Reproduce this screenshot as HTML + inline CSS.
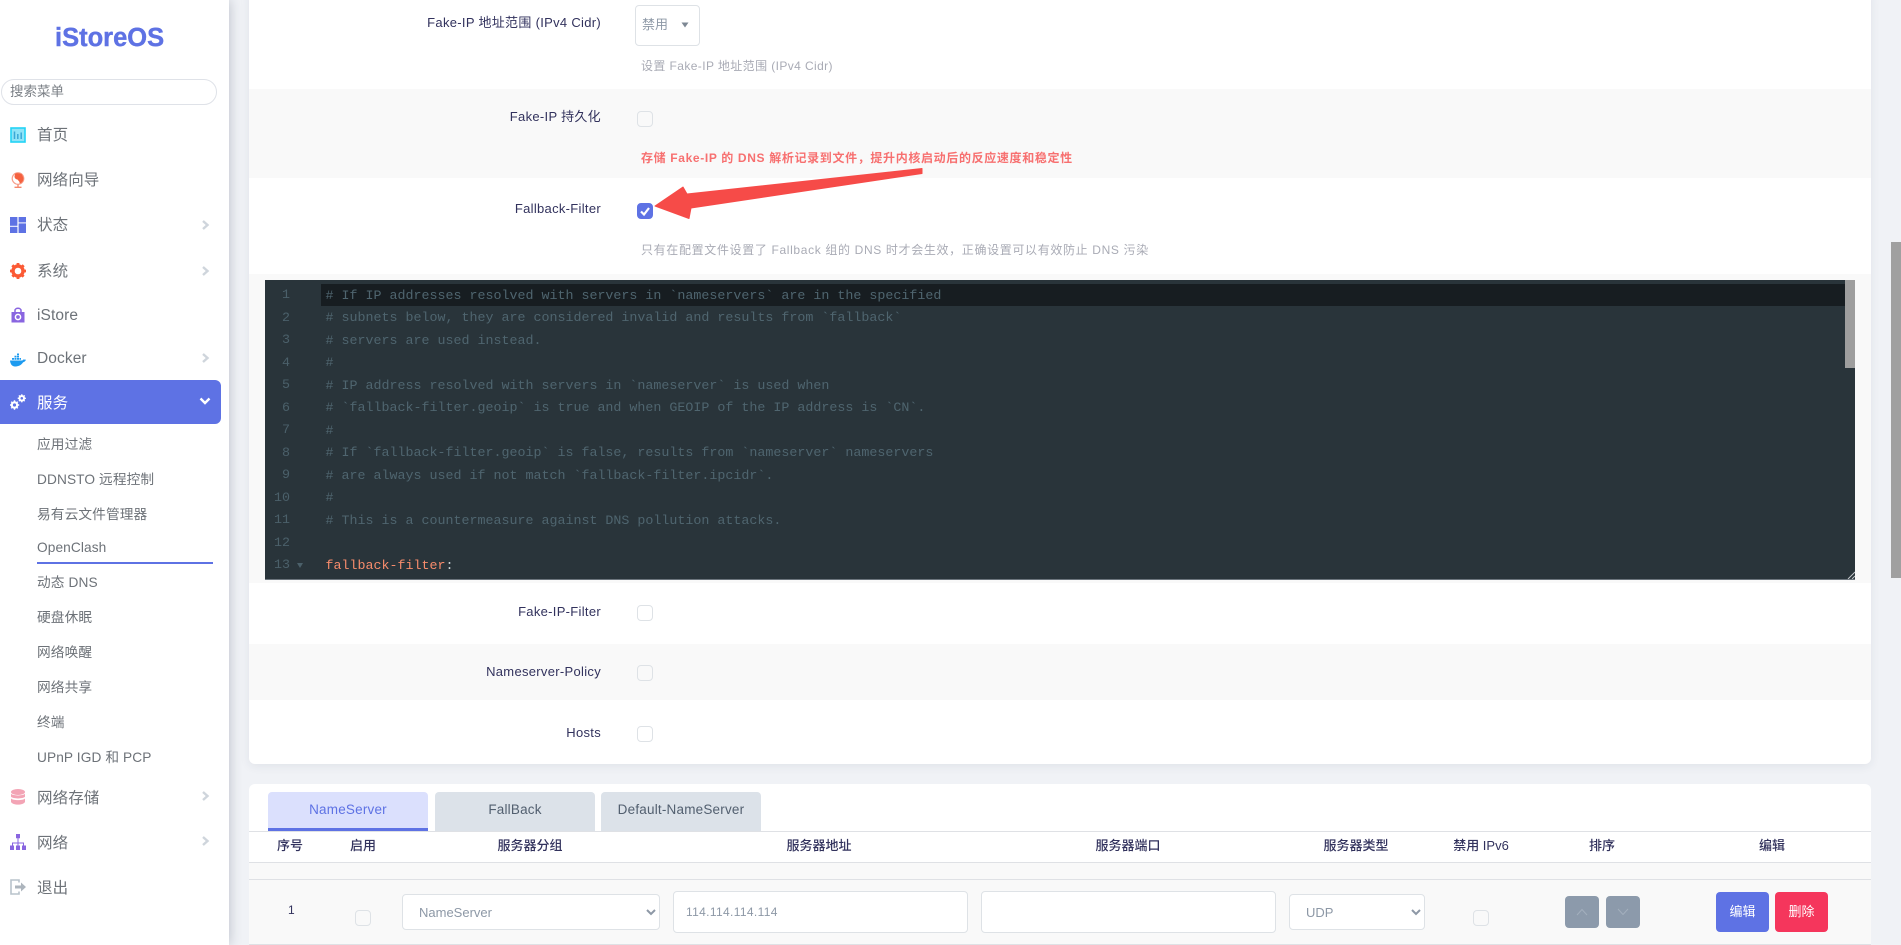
<!DOCTYPE html>
<html lang="zh-CN">
<head>
<meta charset="utf-8">
<title>OpenClash</title>
<style>
html,body{margin:0;padding:0;width:1901px;height:945px;overflow:hidden;background:#f0f2f6;font-family:"Liberation Sans","Noto Sans CJK SC",sans-serif;}
#wrap{position:absolute;left:0;top:0;width:1901px;height:945px;overflow:hidden;background:#f0f2f6;}
.a{position:absolute;}
.t{position:absolute;white-space:nowrap;line-height:20px;height:20px;}
#side{position:absolute;left:0;top:0;width:229px;height:945px;background:#fff;box-shadow:0 0 12px rgba(40,50,80,.28);z-index:3;}
.m{font-size:15.5px;color:#6d7278;left:37px;letter-spacing:.1px;}
.s{font-size:13.7px;color:#6d7278;left:37px;letter-spacing:.1px;}
.chev{position:absolute;left:199.500px;width:10px;height:12px;}
.ic{position:absolute;left:10px;width:16px;height:16px;}
.lab{font-size:13px;color:#32325d;right:1300px;letter-spacing:.3px;text-align:right;}
.desc{font-size:12px;color:#a9abb5;left:641px;letter-spacing:.4px;}
.cb{position:absolute;box-sizing:border-box;width:16px;height:16px;border:1px solid #dee2e6;border-radius:4px;background:#fff;}
.row{position:absolute;left:249px;width:1622px;}
.th{font-size:13px;color:#32325d;font-weight:500;transform:translateX(-50%);}
.tab{position:absolute;top:792px;height:39px;box-sizing:border-box;border-radius:4px 4px 0 0;background:#dce2e9;color:#525f6f;font-size:13.5px;text-align:center;line-height:36px;letter-spacing:.2px;}
.inp{position:absolute;box-sizing:border-box;background:#fff;border:1px solid #dee2e6;border-radius:4px;color:#8d98a6;font-size:12px;line-height:40px;padding-left:12px;letter-spacing:.35px;}
select{position:absolute;box-sizing:border-box;background:#fff;border:1px solid #dee2e6;border-radius:4px;color:#8d98a6;font-size:13px;padding:0 0 0 12px;font-family:"Liberation Sans","Noto Sans CJK SC",sans-serif;margin:0;}
.btn{position:absolute;top:892px;width:53px;height:40px;border-radius:4px;color:#fff;font-size:13px;text-align:center;line-height:40px;}
.sb{position:absolute;top:896px;width:34px;height:32px;border-radius:4px;background:#8c9aab;}
#ed{position:absolute;left:265px;top:280px;width:1590px;height:300px;background:#29343a;border-bottom:1px solid #6c757d;box-sizing:border-box;overflow:hidden;}
.ln{position:absolute;left:0;width:25px;text-align:right;font:13.33px/22px "Liberation Mono",monospace;color:#4b606a;}
.cd{position:absolute;left:60.500px;font:13.33px/22px "Liberation Mono",monospace;color:#4f656f;white-space:pre;}
</style>
</head>
<body>
<div id="wrap">

<!-- main card 1 -->
<div class="a" style="left:249px;top:-10px;width:1622px;height:774px;background:#fff;border-radius:6px;box-shadow:0 2px 10px rgba(40,50,80,.08);"></div>
<div class="row" style="top:89px;height:89px;background:#f9f9f9;"></div>
<div class="row" style="top:274px;height:309px;background:#f9f9f9;"></div>
<div class="row" style="top:644px;height:56px;background:#f9f9f9;"></div>

<div class="t lab" style="top:13px;">Fake-IP 地址范围 (IPv4 Cidr)</div>
<div class="a" style="left:635px;top:5px;width:65px;height:41px;box-sizing:border-box;border:1px solid #dee2e6;border-radius:4px;background:#fff;"></div>
<div class="t" style="left:642px;top:15px;font-size:13px;color:#8d98a6;">禁用</div>
<svg class="a" style="left:681px;top:22px;" width="8" height="6" viewBox="0 0 8 6"><path d="M0.5 0.5H7.5L4 5.5Z" fill="#7d8894"/></svg>
<div class="t desc" style="top:56px;">设置 Fake-IP 地址范围 (IPv4 Cidr)</div>

<div class="t lab" style="top:107px;">Fake-IP 持久化</div>
<div class="cb" style="left:637px;top:111px;background:#f9f9f9;"></div>
<div class="t desc" style="top:148px;color:#f77070;font-weight:bold;letter-spacing:.65px;">存储 Fake-IP 的 DNS 解析记录到文件&#65292;提升内核启动后的反应速度和稳定性</div>

<div class="t lab" style="top:199px;">Fallback-Filter</div>
<div class="cb" style="left:637px;top:203px;background:#5e72e4;border-color:#5e72e4;"></div>
<svg class="a" style="left:637px;top:203px;" width="16" height="16" viewBox="0 0 16 16"><path d="M4 8.5L7 11.5L12 5" fill="none" stroke="#fff" stroke-width="2.2"/></svg>
<div class="t desc" style="top:240px;letter-spacing:.65px;">只有在配置文件设置了 Fallback 组的 DNS 时才会生效&#65292;正确设置可以有效防止 DNS 污染</div>

<!-- editor -->
<div id="ed">
  <div class="a" style="left:56px;top:4px;width:1524px;height:22px;background:#171d21;"></div>
  <div class="a" style="right:0;top:0;width:10px;height:88px;background:#9e9e9e;"></div>
  <div class="ln" style="top:5px;">1</div><div class="cd" style="top:5.500px;"># If IP addresses resolved with servers in `nameservers` are in the specified</div>
  <div class="ln" style="top:27.500px;">2</div><div class="cd" style="top:28px;"># subnets below, they are considered invalid and results from `fallback`</div>
  <div class="ln" style="top:50px;">3</div><div class="cd" style="top:50.500px;"># servers are used instead.</div>
  <div class="ln" style="top:72.500px;">4</div><div class="cd" style="top:73px;">#</div>
  <div class="ln" style="top:95px;">5</div><div class="cd" style="top:95.500px;"># IP address resolved with servers in `nameserver` is used when</div>
  <div class="ln" style="top:117.500px;">6</div><div class="cd" style="top:118px;"># `fallback-filter.geoip` is true and when GEOIP of the IP address is `CN`.</div>
  <div class="ln" style="top:140px;">7</div><div class="cd" style="top:140.500px;">#</div>
  <div class="ln" style="top:162.500px;">8</div><div class="cd" style="top:163px;"># If `fallback-filter.geoip` is false, results from `nameserver` nameservers</div>
  <div class="ln" style="top:185px;">9</div><div class="cd" style="top:185.500px;"># are always used if not match `fallback-filter.ipcidr`.</div>
  <div class="ln" style="top:207.500px;">10</div><div class="cd" style="top:208px;">#</div>
  <div class="ln" style="top:230px;">11</div><div class="cd" style="top:230.500px;"># This is a countermeasure against DNS pollution attacks.</div>
  <div class="ln" style="top:252.500px;">12</div>
  <div class="ln" style="top:275px;">13</div><div class="cd" style="top:275.500px;color:#f78c6c;">fallback-filter<span style="color:#c9d4d8">:</span></div>
  <svg class="a" style="left:32px;top:283px;" width="6" height="5" viewBox="0 0 6 5"><path d="M0 0H6L3 5Z" fill="#4b606a"/></svg>
  <svg class="a" style="right:0;bottom:0;" width="8" height="8" viewBox="0 0 8 8"><path d="M1 8L8 1M5 8L8 5" stroke="#c4c8cc" stroke-width="1"/></svg>
</div>

<div class="t lab" style="top:602px;">Fake-IP-Filter</div>
<div class="cb" style="left:637px;top:605px;"></div>
<div class="t lab" style="top:662px;">Nameserver-Policy</div>
<div class="cb" style="left:637px;top:665px;background:#f9f9f9;"></div>
<div class="t lab" style="top:723px;">Hosts</div>
<div class="cb" style="left:637px;top:726px;"></div>

<!-- arrow -->
<svg class="a" style="left:650px;top:160px;z-index:2;" width="280" height="65" viewBox="650 160 280 65"><path d="M922 168.500L922 173.500L691 208L689 218.500L655 206L683 187L687 194Z" fill="#f64b48" stroke="#f64b48" stroke-width="1" stroke-linejoin="round"/></svg>

<!-- card 2 -->
<div class="a" style="left:249px;top:784px;width:1622px;height:170px;background:#fff;border-radius:6px;"></div>
<div class="tab" style="left:268px;width:160px;background:#dbe0fd;color:#5e72e4;border-bottom:3px solid #5e72e4;">NameServer</div>
<div class="tab" style="left:435px;width:160px;">FallBack</div>
<div class="tab" style="left:601px;width:160px;">Default-NameServer</div>
<div class="row" style="top:831px;height:1px;background:#dfe1e5;"></div>
<div class="row" style="top:862px;height:82px;background:#f9f9f9;"></div>
<div class="row" style="top:862px;height:1px;background:#dfe1e5;"></div>
<div class="row" style="top:879px;height:1px;background:#dfe1e5;"></div>
<div class="row" style="top:944px;height:1px;background:#dfe1e5;"></div>

<div class="t th" style="left:290px;top:836px;">序号</div>
<div class="t th" style="left:363px;top:836px;">启用</div>
<div class="t th" style="left:530px;top:836px;">服务器分组</div>
<div class="t th" style="left:819px;top:836px;">服务器地址</div>
<div class="t th" style="left:1128px;top:836px;">服务器端口</div>
<div class="t th" style="left:1356px;top:836px;">服务器类型</div>
<div class="t th" style="left:1481px;top:836px;">禁用 IPv6</div>
<div class="t th" style="left:1602px;top:836px;">排序</div>
<div class="t th" style="left:1772px;top:836px;">编辑</div>

<div class="t" style="left:288px;top:900px;font-size:12px;color:#32325d;">1</div>
<div class="cb" style="left:355px;top:910px;background:#f9f9f9;"></div>
<select style="left:402px;top:894px;width:258px;height:36px;"><option>NameServer</option></select>
<div class="inp" style="left:673px;top:891px;width:295px;height:42px;">114.114.114.114</div>
<div class="inp" style="left:981px;top:891px;width:295px;height:42px;"></div>
<select style="left:1289px;top:894px;width:136px;height:36px;"><option>UDP</option></select>
<div class="cb" style="left:1473px;top:910px;background:#f9f9f9;"></div>
<div class="sb" style="left:1565px;"><svg class="a" style="left:11px;top:12px;" width="12" height="8" viewBox="0 0 12 8"><path d="M1 7L6 1.500L11 7" fill="none" stroke="#a3afbd" stroke-width="1"/></svg></div>
<div class="sb" style="left:1606px;"><svg class="a" style="left:11px;top:12px;" width="12" height="8" viewBox="0 0 12 8"><path d="M1 1L6 6.500L11 1" fill="none" stroke="#a3afbd" stroke-width="1"/></svg></div>
<div class="btn" style="left:1716px;background:#5e72e4;">编辑</div>
<div class="btn" style="left:1775px;background:#f5365c;">删除</div>

<!-- page scrollbar -->
<div class="a" style="left:1891px;top:242px;width:10px;height:336px;background:#a0a0a0;"></div>

<!-- sidebar -->
<div id="side">
  <div class="t" style="left:55px;top:23px;height:30px;line-height:30px;font-size:25.5px;font-weight:bold;color:#5e72e4;letter-spacing:0;-webkit-text-stroke:.4px #5e72e4;">iStoreOS</div>
  <div class="a" style="left:1px;top:79px;width:216px;height:26px;box-sizing:border-box;border:1px solid #dfe2e8;border-radius:13px;"></div>
  <div class="t" style="left:10px;top:82px;font-size:13.5px;color:#7a7f85;">搜索菜单</div>

  <svg class="ic" style="top:127px;" viewBox="0 0 16 16"><rect x="1" y="1" width="14" height="14" fill="#8fe3f7" stroke="#22d3f5" stroke-width="1.600"/><path d="M4.500 4.500V12M7.800 7V12M11.200 5.500V12" stroke="#3aa7d6" stroke-width="1.500"/></svg>
  <div class="t m" style="top:126px;">首页</div>

  <svg class="ic" style="top:172px;" viewBox="0 0 16 16"><circle cx="8" cy="6.500" r="5.800" fill="#fff" stroke="#f7a08c" stroke-width="1.200"/><path d="M5 1.800C7 .8 10 1 12 2.500L13.500 6C13.500 9 12 11 9.500 11.500C10 9.500 8.500 9 7.500 7.500C6 7.500 4.500 6 4.500 4.500Z" fill="#f5613f"/><path d="M8 12.500V15.300M4.500 15.300H11.500" stroke="#f5866b" stroke-width="1.300"/></svg>
  <div class="t m" style="top:171px;">网络向导</div>

  <svg class="ic" style="top:217px;" viewBox="0 0 16 16" fill="#5e72e4"><rect x="0" y="0" width="7.400" height="8.800"/><rect x="0" y="9.800" width="7.400" height="6.200"/><rect x="8.600" y="0" width="7.400" height="5.400"/><rect x="8.600" y="6.400" width="7.400" height="9.600"/></svg>
  <div class="t m" style="top:216px;">状态</div>
  <svg class="chev" style="top:219px;" viewBox="0 0 10 12"><path d="M3 2L7.500 6L3 10" fill="none" stroke="#cfd5dc" stroke-width="2.400"/></svg>

  <svg class="ic" style="top:263px;" viewBox="0 0 16 16"><circle cx="8" cy="8" r="5" fill="none" stroke="#fb5a35" stroke-width="3.400"/><path d="M8 0V16M0 8H16M2.300 2.300L13.700 13.700M13.700 2.300L2.300 13.700" stroke="#fb5a35" stroke-width="2.800" stroke-dasharray="3.300 9.400 3.300"/></svg>
  <div class="t m" style="top:262px;">系统</div>
  <svg class="chev" style="top:265px;" viewBox="0 0 10 12"><path d="M3 2L7.500 6L3 10" fill="none" stroke="#cfd5dc" stroke-width="2.400"/></svg>

  <svg class="ic" style="top:307px;" viewBox="0 0 16 16"><path d="M1.500 5H14.500V15.500H1.500Z" fill="#8965e0"/><path d="M5 5V3.500C5 .5 11 .5 11 3.500V5" fill="none" stroke="#8965e0" stroke-width="1.500"/><circle cx="8" cy="10" r="2.600" fill="none" stroke="#fff" stroke-width="1.500"/></svg>
  <div class="t m" style="top:306px;">iStore</div>

  <svg class="ic" style="top:351px;" viewBox="0 0 16 16" fill="#1d9bf0"><path d="M0 9.500H12.500C13 8.500 13.300 8.300 16 8.800C15 11 13.500 11 13 11.500C11 14.500 8 15.500 5 15.500C2 15.500 .3 13 0 9.500Z"/><path d="M2 7H4V8.800H2ZM4.500 7H6.500V8.800H4.500ZM7 7H9V8.800H7ZM4.500 4.800H6.500V6.500H4.500ZM7 4.800H9V6.500H7ZM7 2.500H9V4.300H7ZM9.500 7H11V8.800H9.500Z"/></svg>
  <div class="t m" style="top:349px;">Docker</div>
  <svg class="chev" style="top:352px;" viewBox="0 0 10 12"><path d="M3 2L7.500 6L3 10" fill="none" stroke="#cfd5dc" stroke-width="2.400"/></svg>

  <div class="a" style="left:0;top:380px;width:221px;height:44px;background:#5e72e4;border-radius:0 6px 6px 0;"></div>
  <svg class="ic" style="top:394px;" viewBox="0 0 16 16"><circle cx="4.500" cy="11" r="2.700" fill="none" stroke="#fff" stroke-width="2.200"/><path d="M4.500 6.300V15.700M-.2 11H9.200M1.200 7.700L7.800 14.300M7.800 7.700L1.200 14.300" stroke="#fff" stroke-width="1.400" stroke-dasharray="1.400 6.600 1.400"/><circle cx="11.800" cy="4.300" r="2.300" fill="none" stroke="#fff" stroke-width="2"/><path d="M11.800 .2V8.400M7.700 4.300H15.900M8.900 1.400L14.700 7.200M14.700 1.400L8.900 7.200" stroke="#fff" stroke-width="1.300" stroke-dasharray="1.200 5.800 1.200"/></svg>
  <div class="t m" style="top:393.500px;color:#fff;">服务</div>
  <svg class="a" style="left:199px;top:396px;" width="12" height="10" viewBox="0 0 12 10"><path d="M1.500 2.500L6 7L10.500 2.500" fill="none" stroke="#fff" stroke-width="2.400"/></svg>

  <div class="t s" style="top:434.500px;">应用过滤</div>
  <div class="t s" style="top:470px;">DDNSTO 远程控制</div>
  <div class="t s" style="top:505px;">易有云文件管理器</div>
  <div class="t s" style="top:538px;">OpenClash</div>
  <div class="a" style="left:37px;top:562px;width:176px;height:2px;background:#5e72e4;"></div>
  <div class="t s" style="top:573px;">动态 DNS</div>
  <div class="t s" style="top:607.500px;">硬盘休眠</div>
  <div class="t s" style="top:643px;">网络唤醒</div>
  <div class="t s" style="top:678px;">网络共享</div>
  <div class="t s" style="top:713px;">终端</div>
  <div class="t s" style="top:748px;">UPnP IGD 和 PCP</div>

  <svg class="ic" style="top:789px;" viewBox="0 0 16 16" fill="#f3a4b5"><ellipse cx="8" cy="3" rx="7" ry="3"/><path d="M1 4.800C3 7 13 7 15 4.800V7.800C13 10 3 10 1 7.800ZM1 9.500C3 11.700 13 11.700 15 9.500V13C13 16.500 3 16.500 1 13Z"/></svg>
  <div class="t m" style="top:788.500px;">网络存储</div>
  <svg class="chev" style="top:790px;" viewBox="0 0 10 12"><path d="M3 2L7.500 6L3 10" fill="none" stroke="#cfd5dc" stroke-width="2.400"/></svg>

  <svg class="ic" style="top:834px;" viewBox="0 0 16 16"><path d="M8 4V9M2.500 12V9H13.500V12M8 9V12" fill="none" stroke="#8965e0" stroke-width="1"/><path d="M6 0H10V4.200H6ZM0 11.500H4V16H0ZM6 11.500H10V16H6ZM12 11.500H16V16H12Z" fill="#8965e0"/></svg>
  <div class="t m" style="top:833.500px;">网络</div>
  <svg class="chev" style="top:835px;" viewBox="0 0 10 12"><path d="M3 2L7.500 6L3 10" fill="none" stroke="#cfd5dc" stroke-width="2.400"/></svg>

  <svg class="ic" style="top:879px;" viewBox="0 0 16 16"><path d="M9 3.500V1H1V15H9V12.500" fill="none" stroke="#b9c3cc" stroke-width="1.600"/><path d="M5 6.500H11V3.500L16 8L11 12.500V9.500H5Z" fill="#adb5bd"/></svg>
  <div class="t m" style="top:878.500px;">退出</div>
</div>
</div>
</body>
</html>
